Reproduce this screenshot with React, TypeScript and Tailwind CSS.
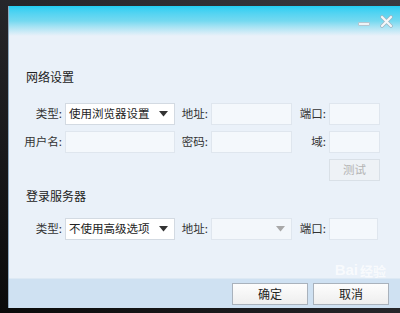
import React from 'react';

const font = { fontFamily: '"Noto Sans CJK SC", "Noto Sans", sans-serif' };

// 下拉框
const Select = ({ value, width, disabled }: { value: string; width: string; disabled?: boolean }) => (
  <div
    className={`${width} h-[22px] flex items-center justify-between pl-[3px] pr-[6px] border ${
      disabled ? 'bg-[#f3f7fb] border-[#dfe6ee]' : 'bg-white border-[#d3dae2]'
    }`}
  >
    <span className="text-[11.5px] text-[#222] leading-none">{value}</span>
    <svg width="9" height="6" viewBox="0 0 9 6">
      <path d="M0 0 H9 L4.5 5.5 Z" fill={disabled ? '#a8a8a8' : '#333'} />
    </svg>
  </div>
);

const Input = ({ width }: { width: string }) => (
  <div className={`${width} h-[22px] bg-[#f4f8fc] border border-[#dfe6ee]`} />
);

const Label = ({ text, width }: { text: string; width: string }) => (
  <div className={`${width} pr-[3px] text-right text-[11.5px] text-[#333] leading-none`}>{text}</div>
);

const App = () => {
  return (
    <div
      className="w-[400px] h-[313px] pt-[6px] pl-[8px] pb-[5px] overflow-hidden bg-gradient-to-tr from-[#0a0a0a] via-[#26262a] to-[#3a3a40]"
      style={font}
    >
      <div className="relative w-full h-full flex flex-col border-l border-[#8fa9bf] bg-[#eaf1f9]">
        {/* barra de título */}
        <div className="relative h-[30px] bg-gradient-to-b from-[#20cef3] via-[#74d9f0] to-[#eaf1f9]">
          <div className="absolute right-[30px] top-[16px] w-[12px] h-[4px] rounded-[1px] bg-[#eef3f6] border border-[#b4c6d0]" />
          <svg className="absolute right-[7px] top-[9px]" width="13" height="13" viewBox="0 0 13 13">
            <path d="M2 2 L11 11 M11 2 L2 11" stroke="#9fb4c0" strokeWidth="3.6" strokeLinecap="round" />
            <path d="M2 2 L11 11 M11 2 L2 11" stroke="#f4f8fa" strokeWidth="2.2" strokeLinecap="round" />
          </svg>
        </div>

        <div className="mt-[33px] pl-[17px] text-[12px] leading-[16px] text-[#222]">网络设置</div>

        <div className="mt-[18px] flex items-center">
          <Label text="类型:" width="w-[56px]" />
          <Select value="使用浏览器设置" width="w-[110px]" />
          <Label text="地址:" width="w-[36px]" />
          <Input width="w-[81px]" />
          <Label text="端口:" width="w-[37px]" />
          <Input width="w-[51px]" />
        </div>

        <div className="mt-[6px] flex items-center">
          <Label text="用户名:" width="w-[56px]" />
          <Input width="w-[110px]" />
          <Label text="密码:" width="w-[36px]" />
          <Input width="w-[81px]" />
          <Label text="域:" width="w-[37px]" />
          <Input width="w-[51px]" />
        </div>

        <div className="mt-[6px] pl-[320px]">
          <div className="w-[51px] h-[22px] flex items-center justify-center bg-[#eef2f6] border border-[#d9e0e7] text-[11.5px] text-[#b4b4b4]">
            测试
          </div>
        </div>

        <div className="mt-[7px] pl-[17px] text-[12px] leading-[16px] text-[#222]">登录服务器</div>

        <div className="mt-[14px] flex items-center">
          <Label text="类型:" width="w-[56px]" />
          <Select value="不使用高级选项" width="w-[110px]" />
          <Label text="地址:" width="w-[36px]" />
          <Select value="" width="w-[81px]" disabled />
          <Label text="端口:" width="w-[37px]" />
          <Input width="w-[49px]" />
        </div>

        <div className="flex-1" />

        {/* pie con botones */}
        <div className="h-[30px] bg-[#cfe1f2] border-t border-[#dde9f4] flex justify-end items-start pt-[4px] pr-[11px] gap-[5px]">
          <button className="w-[76px] h-[22px] bg-gradient-to-b from-[#fdfdfd] to-[#eeeeee] border border-[#a9b2bc] text-[12px] text-[#222]">
            确定
          </button>
          <button className="w-[76px] h-[22px] bg-gradient-to-b from-[#fdfdfd] to-[#eeeeee] border border-[#a9b2bc] text-[12px] text-[#222]">
            取消
          </button>
        </div>

        {/* marca de agua */}
        <div className="absolute right-[14px] bottom-[31px] flex flex-col items-end pointer-events-none opacity-70">
          <div className="flex items-end text-[15px] leading-none font-bold text-white" style={{ fontFamily: '"Liberation Sans", sans-serif' }}>
            <span>Bai</span>
            <span className="ml-[2px] text-[13px]" style={font}>经验</span>
          </div>
        </div>
      </div>
    </div>
  );
};

export default App;
